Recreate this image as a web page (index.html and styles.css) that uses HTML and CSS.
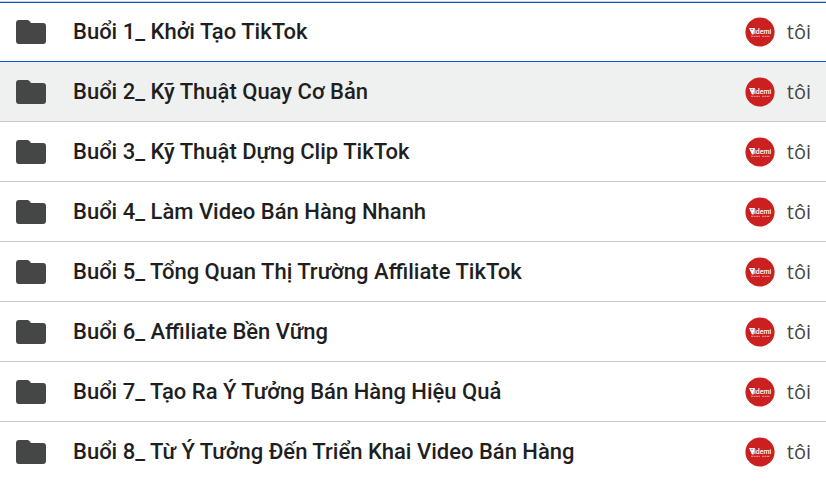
FILE: index.html
```
<!DOCTYPE html>
<html lang="vi">
<head>
    <meta charset="UTF-8">
    <meta name="viewport" content="width=device-width, initial-scale=1.0">
    <title>Drive</title>
    <link rel="stylesheet" href="styles.css">
</head>
<body>
    <!-- shared shapes for every row -->
    <svg class="shapes" aria-hidden="true">
        <symbol id="folder" viewBox="0 0 30 24">
            <path d="M3 0H11.5Q12.5 0 13.2 .8L15 3H27Q30 3 30 6V21Q30 24 27 24H3Q0 24 0 21V3Q0 0 3 0Z"/>
        </symbol>
        <symbol id="videmi" viewBox="0 0 30 30">
            <circle cx="15" cy="15" r="14.6" fill="#cb2020"/>
            <path d="M4 11H10L8.4 17.5H7Z" fill="#fff"/>
            <path d="M5.8 12.4H8" stroke="#cb2020" stroke-width=".6"/>
            <path d="M6 19.3H15M17 19.3H25" stroke="#e89a9a" stroke-width="1" stroke-dasharray="2 .5"/>
        </symbol>
    </svg>

    <table class="files">
        <tbody>
            <tr class="active">
                <td class="icon"><svg class="folder"><use href="#folder"/></svg></td>
                <td class="name">Buổi 1_ Khởi Tạo TikTok</td>
                <td class="owner"><div class="person"><svg class="avatar"><use href="#videmi"/><text x="9" y="17">idemi</text></svg><span>tôi</span></div></td>
            </tr>
            <tr class="hovered">
                <td class="icon"><svg class="folder"><use href="#folder"/></svg></td>
                <td class="name">Buổi 2_ Kỹ Thuật Quay Cơ Bản</td>
                <td class="owner"><div class="person"><svg class="avatar"><use href="#videmi"/><text x="9" y="17">idemi</text></svg><span>tôi</span></div></td>
            </tr>
            <tr>
                <td class="icon"><svg class="folder"><use href="#folder"/></svg></td>
                <td class="name">Buổi 3_ Kỹ Thuật Dựng Clip TikTok</td>
                <td class="owner"><div class="person"><svg class="avatar"><use href="#videmi"/><text x="9" y="17">idemi</text></svg><span>tôi</span></div></td>
            </tr>
            <tr>
                <td class="icon"><svg class="folder"><use href="#folder"/></svg></td>
                <td class="name">Buổi 4_ Làm Video Bán Hàng Nhanh</td>
                <td class="owner"><div class="person"><svg class="avatar"><use href="#videmi"/><text x="9" y="17">idemi</text></svg><span>tôi</span></div></td>
            </tr>
            <tr>
                <td class="icon"><svg class="folder"><use href="#folder"/></svg></td>
                <td class="name">Buổi 5_ Tổng Quan Thị Trường Affiliate TikTok</td>
                <td class="owner"><div class="person"><svg class="avatar"><use href="#videmi"/><text x="9" y="17">idemi</text></svg><span>tôi</span></div></td>
            </tr>
            <tr>
                <td class="icon"><svg class="folder"><use href="#folder"/></svg></td>
                <td class="name">Buổi 6_ Affiliate Bền Vững</td>
                <td class="owner"><div class="person"><svg class="avatar"><use href="#videmi"/><text x="9" y="17">idemi</text></svg><span>tôi</span></div></td>
            </tr>
            <tr>
                <td class="icon"><svg class="folder"><use href="#folder"/></svg></td>
                <td class="name">Buổi 7_ Tạo Ra Ý Tưởng Bán Hàng Hiệu Quả</td>
                <td class="owner"><div class="person"><svg class="avatar"><use href="#videmi"/><text x="9" y="17">idemi</text></svg><span>tôi</span></div></td>
            </tr>
            <tr>
                <td class="icon"><svg class="folder"><use href="#folder"/></svg></td>
                <td class="name">Buổi 8_ Từ Ý Tưởng Đến Triển Khai Video Bán Hàng</td>
                <td class="owner"><div class="person"><svg class="avatar"><use href="#videmi"/><text x="9" y="17">idemi</text></svg><span>tôi</span></div></td>
            </tr>
        </tbody>
    </table>
</body>
</html>
```
FILE: styles.css
```
*{
    padding: 0;
    margin: 0;
    box-sizing: border-box;
}
body{
    background-color: white;
    padding-top: 1px;
}
.shapes{
    position: absolute;
    width: 0;
    height: 0;
}
.files{
    width: 100%;
    border-top: 1px solid #c7c7c7;
    border-collapse: separate;
    border-spacing: 0;
}
.files td{
    height: 60px;
    border-bottom: 1px solid #c7c7c7;
    vertical-align: middle;
}
.files .active td{
    border-top: 1px solid #0b57d0;
    border-bottom-color: #0b57d0;
}
.files .hovered td{
    background-color: #eff1f0;
}
.files tr:last-child td{
    border-bottom-color: transparent;
}
.files .icon{
    width: 73px;
    padding-left: 16px;
}
.folder{
    display: block;
    width: 30px;
    height: 24px;
    fill: #444746;
}
.name{
    font-family: Roboto, "Noto Sans", sans-serif;
    font-size: 22px;
    font-weight: 500;
    line-height: 28px;
    color: #1f1f1f;
}
.files .owner{
    width: 96px;
    padding-right: 15px;
}
.person{
    display: flex;
    align-items: center;
    justify-content: flex-end;
    gap: 12px;
    font-family: "Open Sans", "Noto Sans", sans-serif;
    font-size: 20px;
    line-height: 28px;
    color: #444746;
}
.avatar{
    flex: none;
    width: 30px;
    height: 30px;
}
.avatar text{
    font-family: Roboto, sans-serif;
    font-size: 7px;
    font-weight: 500;
    fill: white;
}
```
